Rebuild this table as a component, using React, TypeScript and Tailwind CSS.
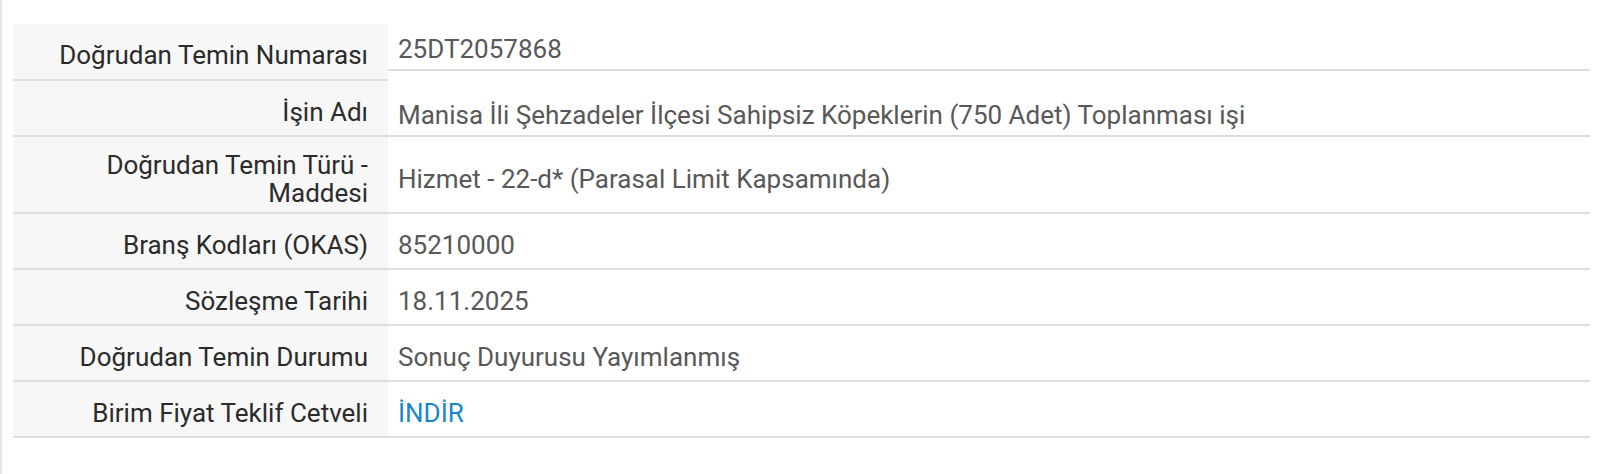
import React from "react";

const labelCls =
  "flex items-center justify-end bg-[#f7f7f7] border-b-2 border-[#dddddd] pr-[20px] pl-4 pt-[7px] text-right text-[#2b2b2b]";
const valueCls =
  "flex items-center bg-white border-b-2 border-[#dddddd] pl-[10px] pr-4 pt-[7px] text-[#585858]";

export default function App() {
  return (
    <div
      className="min-h-[474px] w-[1600px] border-l-2 border-[#e6e6e6] bg-white pl-[11px] pt-[24px] text-[26px] leading-[28px]"
      style={{ fontFamily: "Roboto, 'Noto Sans', Arial, sans-serif" }}
    >
      <div className="grid w-[1577px] grid-cols-[375px_1202px]">
        <div className={`${labelCls} h-[57px]`}>Doğrudan Temin Numarası</div>
        <div className={`${valueCls} h-[47px] self-start !pt-[5px]`}>25DT2057868</div>

        <div className={`${labelCls} h-[56px]`}>İşin Adı</div>
        <div className={`${valueCls} h-[66px] -mt-[10px] !pt-[23px]`}>
          Manisa İli Şehzadeler İlçesi Sahipsiz Köpeklerin (750 Adet) Toplanması işi
        </div>

        <div className={`${labelCls} h-[77px] !pt-[8px]`}>
          <span>
            Doğrudan Temin Türü -<br />
            Maddesi
          </span>
        </div>
        <div className={`${valueCls} h-[77px] !pt-[8px]`}>Hizmet - 22-d* (Parasal Limit Kapsamında)</div>

        <div className={`${labelCls} h-[56px]`}>Branş Kodları (OKAS)</div>
        <div className={`${valueCls} h-[56px]`}>85210000</div>

        <div className={`${labelCls} h-[56px]`}>Sözleşme Tarihi</div>
        <div className={`${valueCls} h-[56px]`}>18.11.2025</div>

        <div className={`${labelCls} h-[56px]`}>Doğrudan Temin Durumu</div>
        <div className={`${valueCls} h-[56px]`}>Sonuç Duyurusu Yayımlanmış</div>

        <div className={`${labelCls} h-[56px]`}>Birim Fiyat Teklif Cetveli</div>
        <div className={`${valueCls} h-[56px]`}>
          <a href="#" className="text-[#1a86c8] no-underline">
            İNDİR
          </a>
        </div>
      </div>
    </div>
  );
}
